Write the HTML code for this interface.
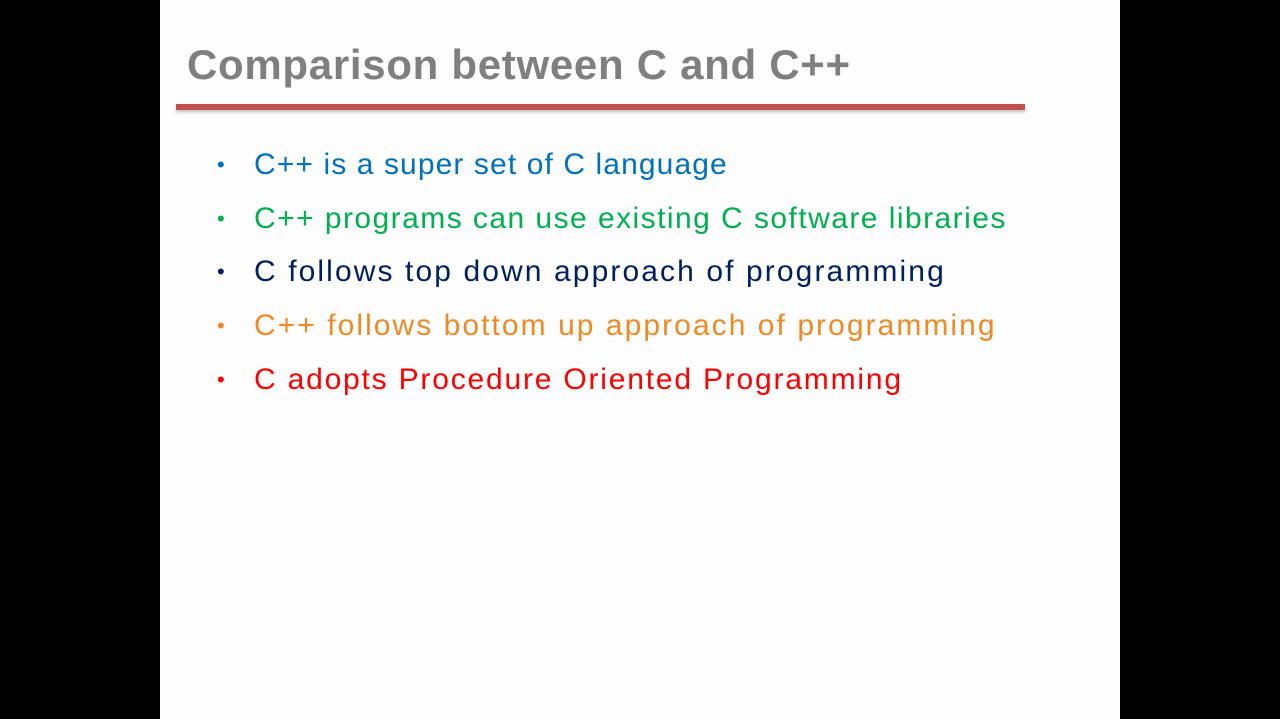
<!DOCTYPE html>
<html><head><style>
body{margin:0;width:1280px;height:719px;background:#000;overflow:hidden;position:relative;font-family:"Liberation Sans",sans-serif}
.slide{position:absolute;left:160px;top:0;width:960px;height:719px;background:#fdfdfd}
.title{position:absolute;left:187px;top:41px;font-size:42px;font-weight:bold;color:#7f7f7f;letter-spacing:0.7px;white-space:nowrap}
.bar{position:absolute;left:176px;top:104px;width:849px;height:6px;background:#c0504d;box-shadow:0 2px 3px rgba(0,0,0,.25)}
.li{position:absolute;left:254px;font-size:30px;white-space:nowrap;letter-spacing:1.2px}
.li:before{content:"•";position:absolute;left:-37px;font-size:22px;top:4px;letter-spacing:0}
</style></head><body>
<div class="slide"></div>
<div class="title">Comparison between C and C++</div>
<div class="bar"></div>
<div class="li" style="top:148px;color:#0070c0;letter-spacing:1.1px">C++ is a super set of C language</div>
<div class="li" style="top:202px;color:#00b050;letter-spacing:1.45px">C++ programs can use existing C software libraries</div>
<div class="li" style="top:255px;color:#002060;letter-spacing:2.1px">C follows top down approach of programming</div>
<div class="li" style="top:309px;color:#f08a24;letter-spacing:2.05px">C++ follows bottom up approach of programming</div>
<div class="li" style="top:363px;color:#ff0000;letter-spacing:1.8px">C adopts Procedure Oriented Programming</div>
</body></html>
